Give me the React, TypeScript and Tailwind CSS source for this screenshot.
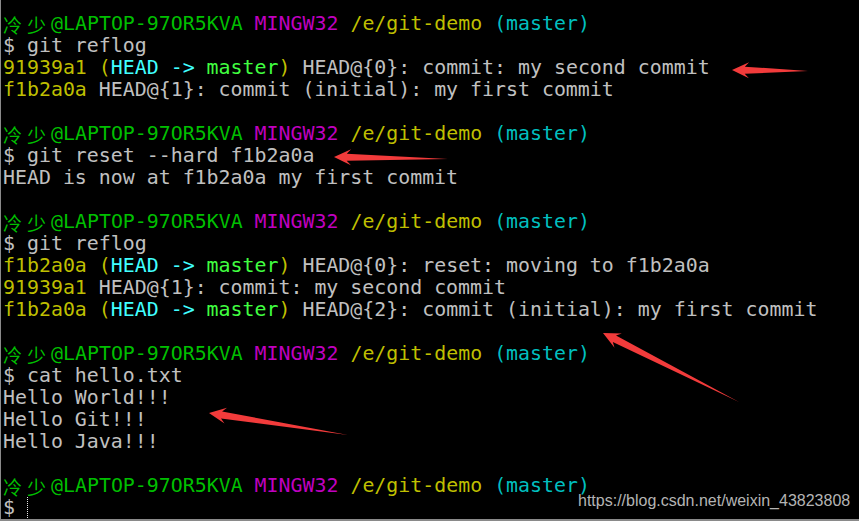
import React from "react";

const Y = "text-[#bfbf00]";
const G = "text-[#00bf00]";
const M = "text-[#bf00bf]";
const C = "text-[#00bfbf]";
const BC = "text-[#40ffff]";
const BG = "text-[#40ff40]";

function Prompt() {
  return (
    <div className="h-[22px]">
      <span className={G}>
        <span className="inline-block align-top w-[24px] h-[22px] leading-[23px] font-['Noto_Sans_CJK_SC',sans-serif] text-[19px]">冷</span>
        <span className="inline-block align-top w-[24px] h-[22px] leading-[23px] font-['Noto_Sans_CJK_SC',sans-serif] text-[19px]">少</span>
        @LAPTOP-97OR5KVA
      </span>{" "}
      <span className={M}>MINGW32</span> <span className={Y}>/e/git-demo</span>{" "}
      <span className={C}>(master)</span>
    </div>
  );
}

function Line({ children }: { children?: React.ReactNode }) {
  return <div className="h-[22px]">{children}</div>;
}

function HeadMaster() {
  return (
    <>
      <span className={Y}>(</span>
      <span className={BC}>HEAD -&gt; </span>
      <span className={BG}>master</span>
      <span className={Y}>)</span>
    </>
  );
}

type P = [number, number];
function arrowPoints(tip: P, tail: P, L: number, W: number, S: number) {
  const dx = tail[0] - tip[0];
  const dy = tail[1] - tip[1];
  const len = Math.hypot(dx, dy);
  const ux = dx / len;
  const uy = dy / len;
  const nx = -uy;
  const ny = ux;
  const pts: P[] = [
    tip,
    [tip[0] + ux * L + nx * W, tip[1] + uy * L + ny * W],
    [tip[0] + ux * L * 0.75 + nx * S, tip[1] + uy * L * 0.75 + ny * S],
    tail,
    [tip[0] + ux * L * 0.75 - nx * S, tip[1] + uy * L * 0.75 - ny * S],
    [tip[0] + ux * L - nx * W, tip[1] + uy * L - ny * W],
  ];
  return pts.map((p) => `${p[0].toFixed(1)},${p[1].toFixed(1)}`).join(" ");
}

export default function App() {
  const arrows: [P, P][] = [
    [[731, 70], [807, 71]],
    [[333, 157], [447, 159]],
    [[602, 333], [738, 402]],
    [[208, 413], [347, 435]],
  ];
  return (
    <div className="relative w-[859px] h-[521px] bg-black overflow-hidden border-l border-[#8a8a8a]">
      <div className="pt-[13px] pl-[2px] font-['DejaVu_Sans_Mono',monospace] text-[19.9px] leading-[22px] text-[#c0c0c0] whitespace-pre">
        <Prompt />
        <Line>$ git reflog</Line>
        <Line>
          <span className={Y}>91939a1</span> <HeadMaster /> HEAD@{"{0}"}: commit: my second commit
        </Line>
        <Line>
          <span className={Y}>f1b2a0a</span> HEAD@{"{1}"}: commit (initial): my first commit
        </Line>
        <Line />
        <Prompt />
        <Line>$ git reset --hard f1b2a0a</Line>
        <Line>HEAD is now at f1b2a0a my first commit</Line>
        <Line />
        <Prompt />
        <Line>$ git reflog</Line>
        <Line>
          <span className={Y}>f1b2a0a</span> <HeadMaster /> HEAD@{"{0}"}: reset: moving to f1b2a0a
        </Line>
        <Line>
          <span className={Y}>91939a1</span> HEAD@{"{1}"}: commit: my second commit
        </Line>
        <Line>
          <span className={Y}>f1b2a0a</span> <HeadMaster /> HEAD@{"{2}"}: commit (initial): my first commit
        </Line>
        <Line />
        <Prompt />
        <Line>$ cat hello.txt</Line>
        <Line>Hello World!!!</Line>
        <Line>Hello Git!!!</Line>
        <Line>Hello Java!!!</Line>
        <Line />
        <Prompt />
        <div className="h-[22px] flex">
          <span>$ </span>
          <span className="block w-0 h-[21px] border-l border-dotted border-[#e8e8e8]"></span>
        </div>
      </div>
      <div className="absolute left-[577px] top-[492px] font-['Liberation_Sans',Arial,sans-serif] text-[16px] leading-[18px] text-[#b4b4b4]">
        https://blog.csdn.net/weixin_43823808
      </div>
      <div className="absolute left-0 right-0 bottom-0 h-[2px] bg-[#8a8a8a]"></div>
      <svg className="absolute inset-0" width="859" height="521">
        {arrows.map(([t, e], i) => (
          <polygon key={i} points={arrowPoints(t, e, 17, 8, 3.5)} fill="#f23b3b" />
        ))}
      </svg>
    </div>
  );
}
